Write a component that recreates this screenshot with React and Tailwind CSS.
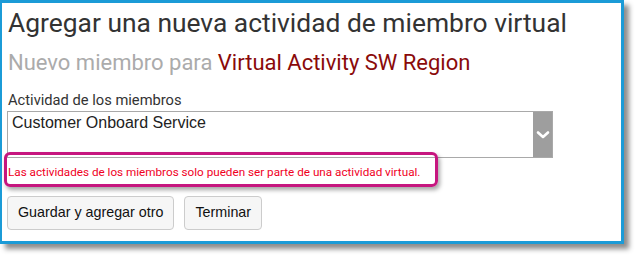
export default function App() {
  return (
    <div className="w-[637px] h-[257px] bg-white relative" style={{ fontFamily: 'Roboto, "Liberation Sans", sans-serif' }}>
      <div className="w-[624px] h-[244px] border-[3px] border-l-2 border-[#1b9bd7] bg-white shadow-[5px_5px_5px_rgba(0,0,0,0.45)] px-[6px] pt-[5px]">
        <h1 className="text-[26.4px] leading-[31px] text-[#333333] font-normal">
          Agregar una nueva actividad de miembro virtual
        </h1>
        <h2 className="mt-[11px] text-[22px] leading-[26px] font-normal">
          <span className="text-[#ababab]">Nuevo miembro para </span>
          <span className="text-[#8a0a0a]">Virtual Activity SW Region</span>
        </h2>
        <label className="block mt-[15px] text-[14.7px] leading-[18px] text-[#333333]">Actividad de los miembros</label>
        <div className="mt-[2px] ml-[-1px] w-[546px] h-[47px] border border-[#a9a9a9] flex">
          <div className="flex-1 pl-[4px] pt-[1px] text-[16px] leading-[20px] text-[#222222]" style={{ fontFamily: '"Liberation Sans", Arial, sans-serif' }}>
            Customer Onboard Service
          </div>
          <div className="w-[19px] bg-[#9e9e9e] flex items-center justify-center">
            <svg width="14" height="10" viewBox="0 0 14 10">
              <path d="M2 2.5 L7 7 L12 2.5" fill="none" stroke="#ffffff" strokeWidth="2.6" strokeLinecap="round" strokeLinejoin="round" />
            </svg>
          </div>
        </div>
        <p className="mt-[6px] text-[11.7px] leading-[16px] text-[#f0001e]">
          Las actividades de los miembros solo pueden ser parte de una actividad virtual.
        </p>
        <div className="mt-[16px] ml-[-1px] flex gap-[10px]" style={{ fontFamily: '"Liberation Sans", Arial, sans-serif' }}>
          <button className="h-[34px] px-[10px] rounded-[4px] border border-[#cccccc] bg-[#f6f6f6] text-[14.3px] text-[#111111]">
            Guardar y agregar otro
          </button>
          <button className="h-[34px] px-[10px] rounded-[4px] border border-[#cccccc] bg-[#f6f6f6] text-[14.3px] text-[#111111]">
            Terminar
          </button>
        </div>
      </div>
      <div className="absolute left-[4px] top-[152px] w-[434px] h-[35px] border-[3px] border-[#c6167f] rounded-[6px] shadow-[2px_3px_4px_rgba(0,0,0,0.35)]" />
    </div>
  );
}
